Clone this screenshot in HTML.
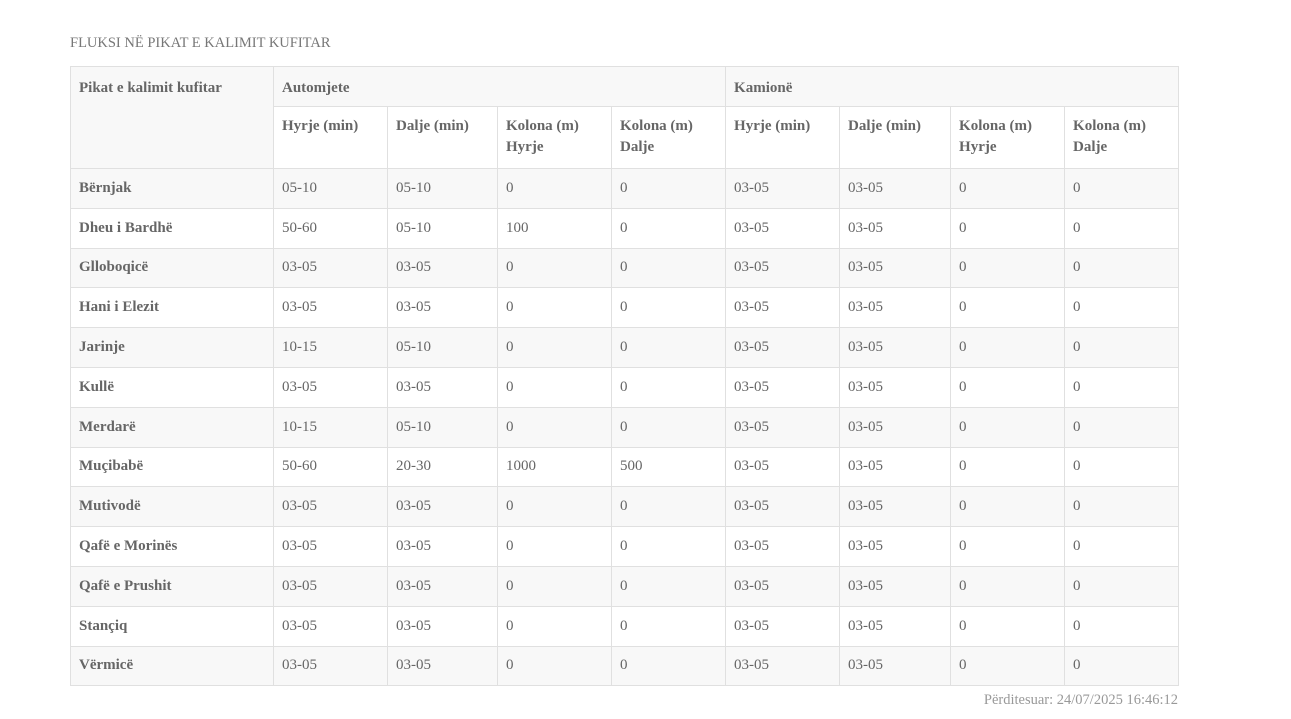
<!DOCTYPE html>
<html><head><meta charset="utf-8"><style>
body{margin:0;background:#fff;font-family:"Liberation Serif",serif;color:#666;}
.t{position:absolute;left:70px;top:35px;font-size:14.5px;color:#777;}
table{position:absolute;left:70px;top:66px;border-collapse:collapse;width:1109px;table-layout:fixed;font-size:15px;}
td,th{border:1px solid #e0e0e0;padding:0 8px;text-align:left;vertical-align:middle;height:38.8px;}
th{font-weight:bold;vertical-align:top;padding-top:11px;line-height:21px;}
thead tr:first-child th{background:#f8f8f8;height:28px;}
thead tr:nth-child(2) th{height:52px;padding-top:9px;}
th.p{background:#f8f8f8;}
tbody tr:nth-child(odd) td{background:#f8f8f8;}
tbody td:first-child{font-weight:bold;}
.u{position:absolute;right:113px;top:692px;font-size:14.5px;color:#999;}
</style></head><body>
<div class="t">FLUKSI NË PIKAT E KALIMIT KUFITAR</div>
<table>
<colgroup><col style="width:203px"><col style="width:114px"><col style="width:110px"><col style="width:114px"><col style="width:114px"><col style="width:114px"><col style="width:111px"><col style="width:114px"><col style="width:114px"></colgroup>
<thead>
<tr><th class="p" rowspan="2">Pikat e kalimit kufitar</th><th colspan="4">Automjete</th><th colspan="4">Kamionë</th></tr>
<tr><th>Hyrje (min)</th><th>Dalje (min)</th><th>Kolona (m) Hyrje</th><th>Kolona (m) Dalje</th><th>Hyrje (min)</th><th>Dalje (min)</th><th>Kolona (m) Hyrje</th><th>Kolona (m) Dalje</th></tr>
</thead>
<tbody>
<tr><td>Bërnjak</td><td>05-10</td><td>05-10</td><td>0</td><td>0</td><td>03-05</td><td>03-05</td><td>0</td><td>0</td></tr>
<tr><td>Dheu i Bardhë</td><td>50-60</td><td>05-10</td><td>100</td><td>0</td><td>03-05</td><td>03-05</td><td>0</td><td>0</td></tr>
<tr><td>Glloboqicë</td><td>03-05</td><td>03-05</td><td>0</td><td>0</td><td>03-05</td><td>03-05</td><td>0</td><td>0</td></tr>
<tr><td>Hani i Elezit</td><td>03-05</td><td>03-05</td><td>0</td><td>0</td><td>03-05</td><td>03-05</td><td>0</td><td>0</td></tr>
<tr><td>Jarinje</td><td>10-15</td><td>05-10</td><td>0</td><td>0</td><td>03-05</td><td>03-05</td><td>0</td><td>0</td></tr>
<tr><td>Kullë</td><td>03-05</td><td>03-05</td><td>0</td><td>0</td><td>03-05</td><td>03-05</td><td>0</td><td>0</td></tr>
<tr><td>Merdarë</td><td>10-15</td><td>05-10</td><td>0</td><td>0</td><td>03-05</td><td>03-05</td><td>0</td><td>0</td></tr>
<tr><td>Muçibabë</td><td>50-60</td><td>20-30</td><td>1000</td><td>500</td><td>03-05</td><td>03-05</td><td>0</td><td>0</td></tr>
<tr><td>Mutivodë</td><td>03-05</td><td>03-05</td><td>0</td><td>0</td><td>03-05</td><td>03-05</td><td>0</td><td>0</td></tr>
<tr><td>Qafë e Morinës</td><td>03-05</td><td>03-05</td><td>0</td><td>0</td><td>03-05</td><td>03-05</td><td>0</td><td>0</td></tr>
<tr><td>Qafë e Prushit</td><td>03-05</td><td>03-05</td><td>0</td><td>0</td><td>03-05</td><td>03-05</td><td>0</td><td>0</td></tr>
<tr><td>Stançiq</td><td>03-05</td><td>03-05</td><td>0</td><td>0</td><td>03-05</td><td>03-05</td><td>0</td><td>0</td></tr>
<tr><td>Vërmicë</td><td>03-05</td><td>03-05</td><td>0</td><td>0</td><td>03-05</td><td>03-05</td><td>0</td><td>0</td></tr>
</tbody>
</table>
<div class="u">Përditesuar: 24/07/2025 16:46:12</div>
</body></html>
